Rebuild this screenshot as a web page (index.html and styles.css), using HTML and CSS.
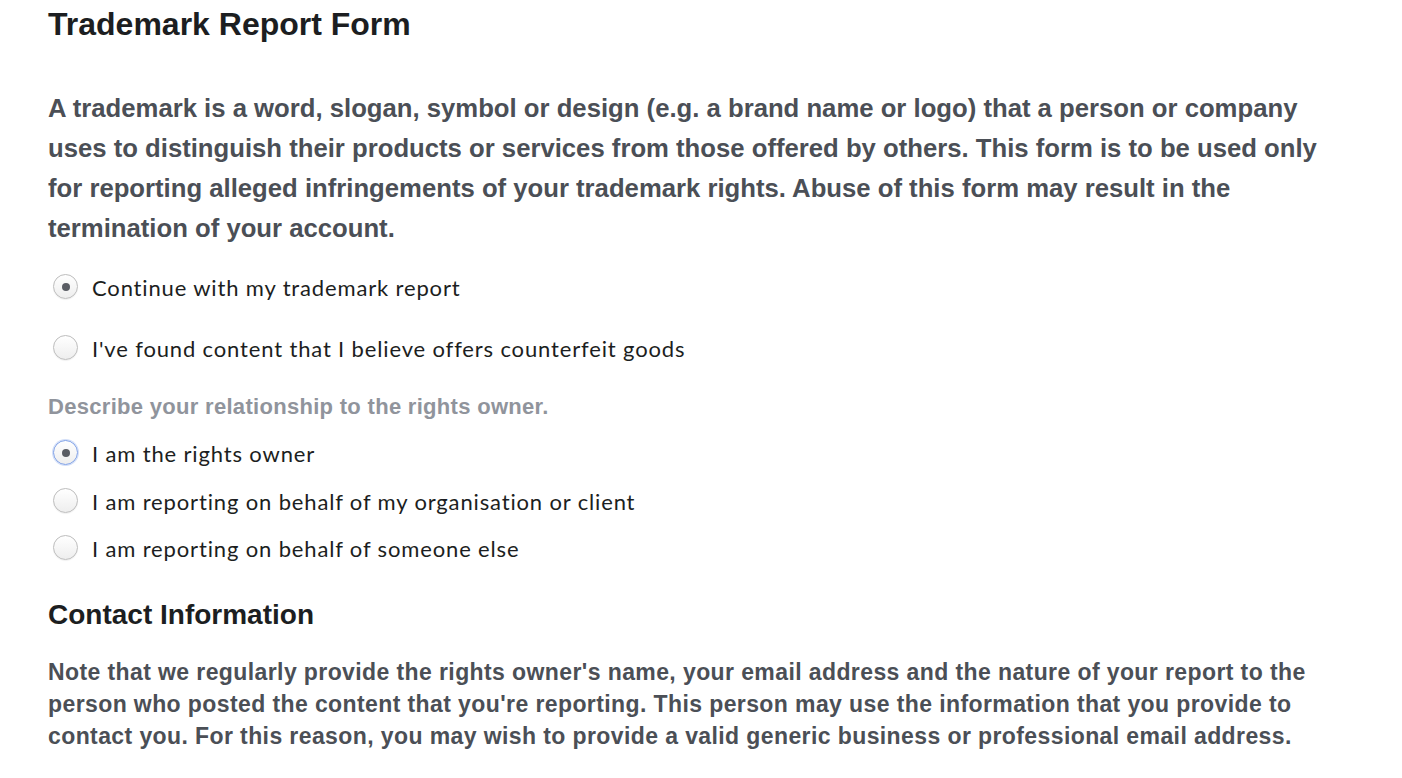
FILE: index.html
```html
<!DOCTYPE html>
<html>
<head>
<meta charset="utf-8">
<link rel="stylesheet" href="styles.css">
</head>
<body>
<div class="page">
  <h1 class="title">Trademark Report Form</h1>
  <p class="intro">A trademark is a word, slogan, symbol or design (e.g. a brand name or logo) that a person or company uses to distinguish their products or services from those offered by others. This form is to be used only for reporting alleged infringements of your trademark rights. Abuse of this form may result in the termination of your account.</p>
  <div class="group group-wide">
    <label class="option"><span class="radio checked"></span><span class="label">Continue with my trademark report</span></label>
    <label class="option"><span class="radio"></span><span class="label">I've found content that I believe offers counterfeit goods</span></label>
  </div>
  <div class="question">Describe your relationship to the rights owner.</div>
  <div class="group group-tight">
    <label class="option"><span class="radio checked focus"></span><span class="label">I am the rights owner</span></label>
    <label class="option"><span class="radio"></span><span class="label">I am reporting on behalf of my organisation or client</span></label>
    <label class="option"><span class="radio"></span><span class="label">I am reporting on behalf of someone else</span></label>
  </div>
  <h2 class="section">Contact Information</h2>
  <p class="note">Note that we regularly provide the rights owner's name, your email address and the nature of your report to the person who posted the content that you're reporting. This person may use the information that you provide to contact you. For this reason, you may wish to provide a valid generic business or professional email address.</p>
</div>
</body>
</html>
```
FILE: styles.css
```css
html, body {
  margin: 0;
  padding: 0;
  background: #ffffff;
}
.page {
  width: 1290px;
  padding: 0 0 0 48px;
  font-family: "Liberation Sans", Arial, sans-serif;
}
.title {
  margin: 0;
  padding-top: 6px;
  font-size: 32px;
  line-height: 36px;
  font-weight: bold;
  color: #1c1e21;
}
.intro {
  margin: 46px 0 0 0;
  font-size: 25.7px;
  line-height: 40px;
  font-weight: bold;
  color: #4b4f56;
}
.group {
  display: flex;
  flex-direction: column;
}
.group-wide {
  margin-top: 15px;
  gap: 13px;
}
.group-tight {
  margin-top: 8px;
  gap: 0;
}
.option {
  display: flex;
  align-items: center;
  height: 47.5px;
}
.radio {
  box-sizing: border-box;
  width: 25px;
  height: 25px;
  margin-left: 5px;
  border-radius: 50%;
  border: 1px solid #bdbdbd;
  background: linear-gradient(#ffffff, #eeeeee);
  box-shadow: 0 1px 1px rgba(0,0,0,0.06);
  display: flex;
  align-items: center;
  justify-content: center;
  flex: none;
}
.radio.checked::after {
  content: "";
  width: 8px;
  height: 8px;
  border-radius: 50%;
  background: #5a5d64;
}
.radio.focus {
  border: 1px solid #7d9fe6;
  box-shadow: 0 0 0 1px #d3dff8;
}
.label {
  margin-left: 14px;
  font-family: Lato, "Open Sans", sans-serif;
  font-size: 22px;
  letter-spacing: 0.85px;
  color: #1c1e21;
  position: relative;
  top: 1px;
}
.question {
  margin-top: 22px;
  font-size: 22px;
  letter-spacing: 0.3px;
  line-height: 28px;
  font-weight: bold;
  color: #90949c;
}
.section {
  margin: 25px 0 0 0;
  font-size: 28px;
  line-height: 36px;
  font-weight: bold;
  color: #1c1e21;
}
.note {
  margin: 23px 0 0 0;
  font-size: 23px;
  letter-spacing: 0.4px;
  line-height: 32px;
  font-weight: bold;
  color: #4b4f56;
}
```
